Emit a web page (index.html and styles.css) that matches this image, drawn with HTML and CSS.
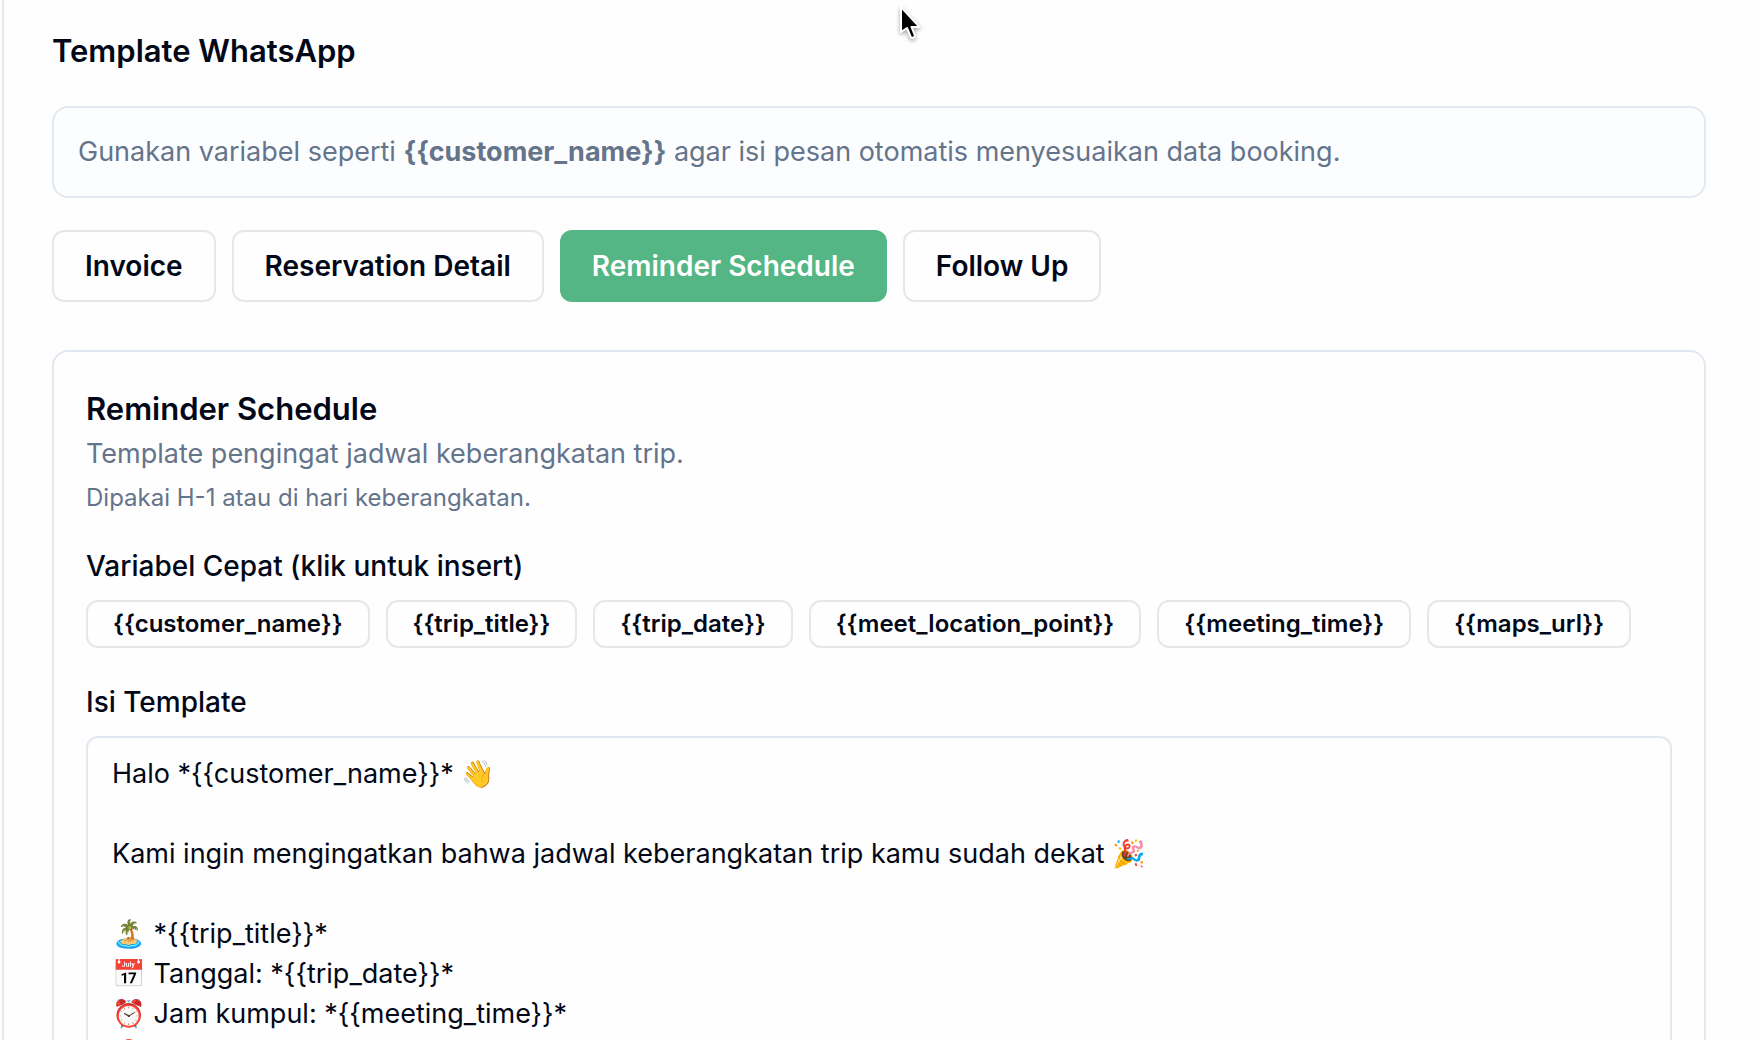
FILE: index.html
```html
<!DOCTYPE html>
<html lang="id">
<head>
<meta charset="UTF-8">
<meta name="viewport" content="width=device-width, initial-scale=1.0">
<title>Template WhatsApp</title>
<link rel="stylesheet" href="styles.css">
</head>
<body>

<main class="content">
  <h1 class="page-title">Template WhatsApp</h1>

  <p class="notice">Gunakan variabel seperti <strong>{{customer_name}}</strong> agar isi pesan otomatis menyesuaikan data booking.</p>

  <nav class="tabs">
    <button type="button" class="tab">Invoice</button>
    <button type="button" class="tab">Reservation Detail</button>
    <button type="button" class="tab tab-active">Reminder Schedule</button>
    <button type="button" class="tab">Follow Up</button>
  </nav>

  <section class="card">
    <h2 class="card-title">Reminder Schedule</h2>
    <p class="card-desc">Template pengingat jadwal keberangkatan trip.</p>
    <p class="card-hint">Dipakai H-1 atau di hari keberangkatan.</p>

    <h3 class="label">Variabel Cepat (klik untuk insert)</h3>
    <div class="chips">
      <button type="button" class="chip">{{customer_name}}</button>
      <button type="button" class="chip">{{trip_title}}</button>
      <button type="button" class="chip">{{trip_date}}</button>
      <button type="button" class="chip">{{meet_location_point}}</button>
      <button type="button" class="chip">{{meeting_time}}</button>
      <button type="button" class="chip">{{maps_url}}</button>
    </div>

    <label class="label" for="template">Isi Template</label>
    <textarea id="template" class="editor" rows="14">Halo *{{customer_name}}* 👋

Kami ingin mengingatkan bahwa jadwal keberangkatan trip kamu sudah dekat 🎉

🏝️ *{{trip_title}}*
📅 Tanggal: *{{trip_date}}*
⏰ Jam kumpul: *{{meeting_time}}*
📍</textarea>
  </section>
</main>

<!-- pointer -->
<svg class="cursor" width="28" height="40" viewBox="0 0 28 40" aria-hidden="true">
  <path d="M4 3 V28 L10 24 L13.500 32.500 Q14.500 34.500 16.500 33.500 Q18.500 32.500 17.500 30.500 L14.500 23 H22.500 Z" fill="#000" stroke="#fff" stroke-width="2" stroke-linejoin="round"/>
</svg>

</body>
</html>
```

FILE: styles.css
```css
*{box-sizing:border-box;}

body{
  margin:0;
  font-family:Inter, sans-serif;
  font-size:27px;
  line-height:40px;
  color:#020817;
  background:#fefefe;
  overflow:hidden;
}

h1, h2, h3, p{margin:0;}

.content{
  margin-left:2px;
  padding:24px 54px 48px 48px;
  border-left:2px solid #e2e8f0;
}

.page-title{
  font-size:31px;
  line-height:54px;
  font-weight:600;
}

.notice{
  margin-top:28px;
  padding:24px;
  border:2px solid #e2e8f0;
  border-radius:16px;
  background:#fcfdfe;
  color:#64748b;
}

/* TABS */
.tabs{
  display:flex;
  flex-wrap:wrap;
  gap:16px;
  margin-top:32px;
}

.tab, .chip{
  border:2px solid #e5e7eb;
  background:#fefefe;
  color:inherit;
  font:inherit;
  font-weight:600;
  cursor:pointer;
}

.tab{
  padding:14px 31px;
  border-radius:12px;
  font-size:28px;
}

.tab-active{
  padding:16px 32px;
  border:none;
  background:#55b685;
  color:#fff;
}

/* CARD */
.card{
  margin-top:48px;
  padding:32px;
  border:2px solid #e2e8f0;
  border-radius:16px;
}

.card-title{
  font-size:31px;
  line-height:50px;
  font-weight:600;
}

.card-desc, .card-hint{color:#64748b;}

.card-hint{
  margin-top:8px;
  font-size:24px;
  line-height:32px;
}

.label{
  display:block;
  margin-top:32px;
  font-size:28px;
  font-weight:500;
}

.chips{
  display:flex;
  flex-wrap:wrap;
  gap:16px;
  margin:14px 0 34px;
}

.chip{
  padding:6px 25px;
  border-radius:12px;
  font-size:24px;
  line-height:32px;
}

.editor{
  display:block;
  width:100%;
  margin-top:14px;
  padding:16px 24px;
  border:2px solid #e2e8f0;
  border-radius:12px;
  background:#fefefe;
  color:inherit;
  font:inherit;
  resize:none;
}

/* sits over the page */
.cursor{
  position:absolute;
  top:4px;
  left:897px;
  filter:drop-shadow(0 2px 2px rgba(0,0,0,0.35));
}
```
